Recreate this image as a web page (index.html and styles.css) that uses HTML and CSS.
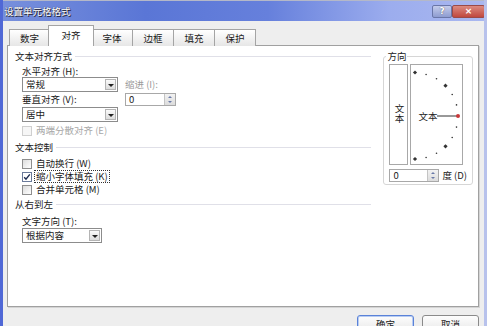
FILE: index.html
```html
<!DOCTYPE html>
<html lang="zh-CN">

<head>
  <meta charset="UTF-8">
  <title>设置单元格格式</title>
  <link rel="stylesheet" href="styles.css">
</head>

<body>
  <div class="window">
    <div class="titlebar">
      <span class="title">设置单元格格式</span>
      <div class="caption-btns">
        <span class="cap-btn help">?</span>
        <span class="cap-btn close">×</span>
      </div>
    </div>

    <div class="client">
      <div class="tabs">
        <span class="tab">数字</span>
        <span class="tab active">对齐</span>
        <span class="tab">字体</span>
        <span class="tab">边框</span>
        <span class="tab">填充</span>
        <span class="tab">保护</span>
      </div>

      <div class="panel">
        <div class="left">
          <div class="group-head"><span>文本对齐方式</span></div>
          <div class="align-grid">
            <span class="lbl">水平对齐 (H):</span>
            <span></span>
            <div class="select">常规<span class="drop"></span></div>
            <span class="lbl gray">缩进 (I):</span>
            <span class="lbl">垂直对齐 (V):</span>
            <div class="spin w51"><span class="spin-val">0</span><span class="spin-btns"></span></div>
            <div class="select">居中<span class="drop"></span></div>
          </div>
          <div class="check disabled"><span class="box"></span><span class="ctext">两端分散对齐 (E)</span></div>

          <div class="group-head mt-ctrl"><span>文本控制</span></div>
          <div class="checks">
            <div class="check"><span class="box"></span><span class="ctext">自动换行 (W)</span></div>
            <div class="check"><span class="box checked"><svg width="8" height="8" viewBox="0 0 8 8"><path d="M1.2 4.2 L3 6.2 L6.8 1.4" fill="none" stroke="#1b2a50" stroke-width="1.4"/></svg></span><span class="ctext focus">缩小字体填充 (K)</span></div>
            <div class="check"><span class="box"></span><span class="ctext">合并单元格 (M)</span></div>
          </div>

          <div class="group-head mt-rtl"><span>从右到左</span></div>
          <div class="indent">
            <span class="lbl dir-lbl">文字方向 (T):</span>
            <div class="select w80">根据内容<span class="drop"></span></div>
          </div>
        </div>

        <fieldset class="orient">
          <legend>方向</legend>
          <div class="orient-boxes">
            <div class="vbox"><span class="vtext">文本</span></div>
            <div class="dial">
              <svg width="51" height="99" viewBox="0 0 51 99">
                <rect x="2.5" y="6" width="3" height="3" transform="rotate(45 4 7.5)" fill="#333"/>
                <circle cx="15.1" cy="9.5" r="0.8" fill="#333"/>
                <circle cx="25.5" cy="13.8" r="0.8" fill="#333"/>
                <rect x="33" y="19.2" width="3" height="3" transform="rotate(45 34.5 20.7)" fill="#333"/>
                <circle cx="41.2" cy="29.5" r="0.8" fill="#333"/>
                <circle cx="45.5" cy="39.9" r="0.8" fill="#333"/>
                <circle cx="45.5" cy="62.1" r="0.8" fill="#333"/>
                <circle cx="41.2" cy="72.5" r="0.8" fill="#333"/>
                <rect x="33" y="79.8" width="3" height="3" transform="rotate(45 34.5 81.3)" fill="#333"/>
                <circle cx="25.5" cy="88.2" r="0.8" fill="#333"/>
                <circle cx="15.1" cy="92.5" r="0.8" fill="#333"/>
                <rect x="2.5" y="92.5" width="3" height="3" transform="rotate(45 4 94)" fill="#333"/>
                <text x="17" y="54.5" font-size="9.5" text-anchor="middle" fill="#222">文本</text>
                <line x1="26" y1="51" x2="46" y2="51" stroke="#333" stroke-width="1"/>
                <circle cx="47" cy="51" r="2" fill="#c8383a"/>
              </svg>
            </div>
          </div>
          <div class="deg-row">
            <div class="spin w50"><span class="spin-val">0</span><span class="spin-btns"></span></div>
            <span class="lbl">度 (D)</span>
          </div>
        </fieldset>
      </div>

      <div class="footer">
        <button class="btn default">确定</button>
        <button class="btn">取消</button>
      </div>
    </div>
  </div>
</body>

</html>
```

FILE: styles.css
```css
body {
  margin: 0;
  font-family: "Noto Sans CJK SC", "Liberation Sans", sans-serif;
  font-size: 9.5px;
  color: #1a1a1a;
  background: #eeeeee;
}

.window {
  width: 487px;
  height: 326px;
  overflow: hidden;
  box-sizing: border-box;
  border-left: 3px solid #5068d6;
  border-right: 3px solid #b8c2ec;
  background: #eeeeee;
}

/* title bar */
.titlebar {
  height: 21px;
  box-sizing: border-box;
  border-top: 1px solid #b4b8c8;
  margin-left: -3px;
  margin-right: -3px;
  padding: 3px 2px 0 4px;
  display: flex;
  justify-content: space-between;
  align-items: flex-start;
  background: linear-gradient(to right, #7890dc 0%, #5a76d6 30%, #6680dc 55%, #9cadee 80%, #aab8f0 100%);
}

.title {
  color: #fff;
  line-height: 14px;
  text-shadow: 1px 1px 0 #223, 0 0 1px #334;
}

.caption-btns {
  display: flex;
  margin-top: 1px;
}

.cap-btn {
  height: 11px;
  line-height: 11px;
  text-align: center;
  color: #fff;
  font-family: "DejaVu Sans", sans-serif;
  font-weight: bold;
  font-size: 9px;
  border: 1px solid #6a76a8;
  border-radius: 2px;
}

.help {
  width: 18px;
  background: linear-gradient(#c4ccec, #8e9cd0);
  text-shadow: 0 0 1px #334;
}

.close {
  width: 31px;
  background: linear-gradient(#dc8a80, #c0483e);
  border-color: #9a4a48;
}

/* client area */
.client {
  padding: 0 5px 0 4px;
}

.tabs {
  display: flex;
  align-items: flex-end;
  height: 20px;
  margin-top: 5px;
  padding-left: 2px;
  position: relative;
  z-index: 1;
  margin-bottom: -1px;
}

.tab {
  width: 41px;
  height: 17px;
  box-sizing: border-box;
  line-height: 16px;
  text-align: center;
  border: 1px solid #a4a4a4;
  border-bottom: none;
  border-left: none;
  background: linear-gradient(#ffffff, #e6e6e6);
}

.tab:first-child {
  border-left: 1px solid #a4a4a4;
}

.active {
  width: 46px;
  height: 21px;
  margin: 0 -2px;
  line-height: 18px;
  border-left: 1px solid #a4a4a4;
  background: #fff;
  position: relative;
  z-index: 2;
}

.panel {
  height: 262px;
  box-sizing: border-box;
  border: 1px solid #a0a0a0;
  box-shadow: 1px 1px 0 #d4d4d4;
  background: #fff;
  padding: 5px 5px 0 7px;
  display: flex;
}

.left {
  flex: 1;
}

.group-head {
  display: flex;
  align-items: center;
  height: 11px;
  line-height: 11px;
}

.group-head::after {
  content: "";
  flex: 1;
  margin-left: 3px;
  border-top: 1px solid #e0e0e8;
}

.mt-ctrl {
  margin-top: 6px;
}

.mt-rtl {
  margin-top: 3px;
}

.lbl {
  line-height: 11px;
  white-space: nowrap;
}

.gray {
  color: #9a9a9a;
}

.align-grid {
  display: grid;
  grid-template-columns: 96px 51px;
  grid-template-rows: 11px 15px 15px 15px;
  column-gap: 7px;
  align-items: center;
  margin: 4px 0 0 7px;
}

.select {
  position: relative;
  height: 15px;
  box-sizing: border-box;
  border: 1px solid #8c8c8c;
  background: #fff;
  line-height: 13px;
  padding-left: 3px;
}

.w80 {
  width: 80px;
}

.drop {
  position: absolute;
  top: 1px;
  right: 1px;
  width: 11px;
  height: 11px;
  box-sizing: border-box;
  border: 1px solid #b4b4b4;
  background: linear-gradient(#fafafa, #dcdcdc);
}

.drop::after {
  content: "";
  position: absolute;
  left: 2px;
  top: 4px;
  border-left: 3px solid transparent;
  border-right: 3px solid transparent;
  border-top: 3px solid #222;
}

.spin {
  display: flex;
  height: 13px;
  box-sizing: border-box;
  border: 1px solid #a8a8a8;
  background: #fff;
}

.w51 {
  width: 51px;
}

.w50 {
  width: 50px;
}

.spin-val {
  flex: 1;
  line-height: 11px;
  padding-left: 3px;
}

.spin-btns {
  width: 10px;
  background: linear-gradient(#f2f2f2, #dcdcdc);
  border-left: 1px solid #c4c4c4;
  position: relative;
}

.spin-btns::before,
.spin-btns::after {
  content: "";
  position: absolute;
  left: 3px;
  border-left: 2px solid transparent;
  border-right: 2px solid transparent;
}

.spin-btns::before {
  top: 2px;
  border-bottom: 2px solid #6a7aa8;
}

.spin-btns::after {
  bottom: 2px;
  border-top: 2px solid #6a7aa8;
}

/* checkboxes */
.check {
  display: flex;
  align-items: center;
  height: 13px;
  margin-left: 7px;
}

.disabled {
  height: 11px;
  margin-top: 3px;
  color: #a8a8a8;
}

.checks {
  margin-top: 4px;
}

.box {
  width: 8px;
  height: 8px;
  border: 1px solid #8e8e8e;
  background: linear-gradient(135deg, #dcdcdc, #ffffff);
  margin-right: 3px;
  flex-shrink: 0;
  display: flex;
}

.disabled .box {
  border-color: #cfcfcf;
  background: #f6f6f6;
}

.checked {
  border-color: #6a7a9a;
  background: #fff;
}

.ctext {
  line-height: 11px;
  padding: 0 1px;
}

.focus {
  outline: 1px dotted #333;
}

.indent {
  margin: 6px 0 0 7px;
}

.dir-lbl {
  display: block;
  margin-bottom: 1px;
}

/* orientation */
.orient {
  width: 89px;
  box-sizing: border-box;
  margin: 0 0 0 12px;
  padding: 2px 5px 2px 5px;
  border: 1px solid #d6d6d6;
  border-radius: 3px;
  align-self: flex-start;
}

.orient legend {
  padding: 0 1px;
  margin-left: -3px;
  line-height: 11px;
}

.orient-boxes {
  display: flex;
  gap: 2px;
  height: 101px;
}

.vbox {
  width: 19px;
  box-sizing: border-box;
  border: 1px solid #a8a8a8;
  display: flex;
  align-items: center;
  justify-content: center;
  padding-bottom: 2px;
}

.vtext {
  writing-mode: vertical-rl;
  text-orientation: upright;
  line-height: 11px;
}

.dial {
  width: 53px;
  box-sizing: border-box;
  border: 1px solid #a8a8a8;
}

.dial svg {
  display: block;
}

.deg-row {
  display: flex;
  align-items: center;
  gap: 3px;
  margin-top: 4px;
}

/* buttons */
.footer {
  display: flex;
  justify-content: flex-end;
  gap: 8px;
  margin-top: 8px;
}

.btn {
  width: 57px;
  height: 18px;
  padding: 0;
  font-family: inherit;
  font-size: 9.5px;
  line-height: 11px;
  color: #1a1a1a;
  border: 1px solid #8a8a8a;
  border-radius: 3px;
  background: linear-gradient(#fdfdfd, #e8e8e8);
}

.default {
  border-color: #5a82d8;
  box-shadow: inset 0 0 0 1px #b8ccf2;
}
```
